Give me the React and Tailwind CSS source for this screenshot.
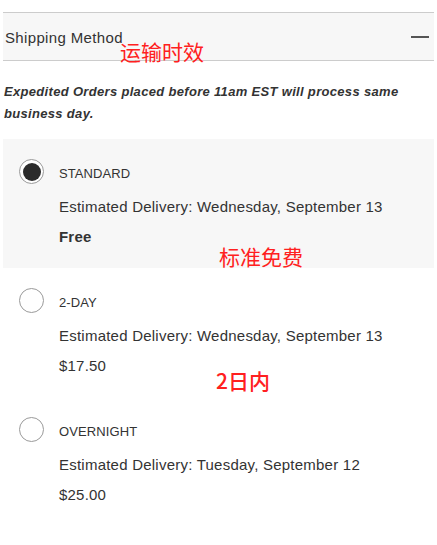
import React from "react";

const options = [
  {
    id: "standard",
    label: "STANDARD",
    eta: "Estimated Delivery: Wednesday, September 13",
    price: "Free",
    selected: true,
  },
  {
    id: "2day",
    label: "2-DAY",
    eta: "Estimated Delivery: Wednesday, September 13",
    price: "$17.50",
  },
  {
    id: "overnight",
    label: "OVERNIGHT",
    eta: "Estimated Delivery: Tuesday, September 12",
    price: "$25.00",
  },
];

function Radio({ checked }) {
  return (
    <span className="flex h-[25px] w-[25px] shrink-0 items-center justify-center rounded-full border border-[#9a9a9a] bg-white">
      {checked && <span className="h-[18px] w-[18px] rounded-full bg-[#2b2b2b]" />}
    </span>
  );
}

function Option({ opt }) {
  return (
    <div
      className={`mx-[3px] flex h-[129px] gap-[15px] pl-4 pt-5 ${
        opt.selected ? "bg-[#f7f7f7]" : "bg-white"
      }`}
    >
      <Radio checked={opt.selected} />
      <div className="flex flex-col">
        <div className="flex h-[27px] items-center pt-[2px] text-[13px] tracking-[0.1px] text-[#333]">
          {opt.label}
        </div>
        <div className="mt-[11px] text-[15px] leading-[20px] tracking-[0.23px] text-[#333]">{opt.eta}</div>
        <div
          className={`mt-[10px] text-[15px] leading-[20px] tracking-[0.2px] text-[#333] ${
            opt.selected ? "font-bold" : ""
          }`}
        >
          {opt.price}
        </div>
      </div>
    </div>
  );
}

export default function App() {
  const cjk = { fontFamily: '"Noto Sans CJK SC", sans-serif' };
  return (
    <div
      className="relative h-[545px] w-[437px] overflow-hidden bg-white pt-3"
      style={{ fontFamily: '"Liberation Sans", Arial, sans-serif' }}
    >
      <div className="mx-[3px] flex h-[49px] items-center justify-between border-y border-[#cccccc] bg-[#f7f7f7] pl-[2px] pr-[5px]">
        <span className="pt-[3px] text-[15px] tracking-[0.35px] text-[#333]">Shipping Method</span>
        <span className="h-[2px] w-[18px] bg-[#555]" />
      </div>

      <p className="mb-[14px] mt-5 pl-1 pr-2 text-[13px] font-bold italic leading-[22px] tracking-[0.32px] text-[#333]">
        Expedited Orders placed before 11am EST will process same business day.
      </p>

      {options.map((o) => (
        <Option key={o.id} opt={o} />
      ))}

      <span className="absolute left-[120px] top-[37px] text-[21px] leading-[28px] text-[#ff2020]" style={cjk}>
        运输时效
      </span>
      <span className="absolute left-[219px] top-[242px] text-[21px] leading-[28px] text-[#ff2020]" style={cjk}>
        标准免费
      </span>
      <span className="absolute left-[216px] top-[366px] text-[21px] font-medium leading-[28px] text-[#ff2020]" style={cjk}>
        2日内
      </span>
    </div>
  );
}
